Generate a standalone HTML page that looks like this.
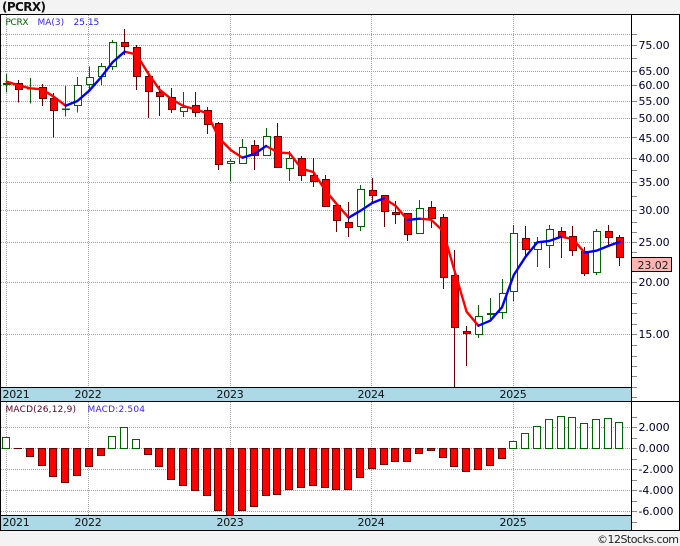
<!DOCTYPE html>
<html><head><meta charset="utf-8"><title>PCRX</title>
<style>
html,body{margin:0;padding:0;background:#f3f3f3;width:680px;height:546px;overflow:hidden}
svg{display:block}
text{font-family:"DejaVu Sans","Liberation Sans",sans-serif}
.y{font-size:11px;fill:#000033;letter-spacing:-.1px}
.b{font-size:11px;fill:#111;letter-spacing:-.25px}
.g rect{fill:#fff;stroke:#006400;stroke-width:1}
.g path{stroke:#006400;stroke-width:1;fill:none}
.r rect{fill:#f00;stroke:#700000;stroke-width:1}
.r path{stroke:#660000;stroke-width:1;fill:none}
.ma{fill:none;stroke-width:2.4;stroke-linejoin:round;stroke-linecap:round}
</style></head>
<body>
<svg width="680" height="546" viewBox="0 0 680 546" xmlns="http://www.w3.org/2000/svg">
<rect width="680" height="546" fill="#f3f3f3"/>
<rect x="0" y="14" width="680" height="517" fill="#fff"/>
<text x="2" y="11" font-size="12" font-weight="bold" fill="#111" textLength="44">(PCRX)</text>

<!-- grid -->
<path fill="none" stroke="#a0a0a0" stroke-dasharray="1 1" d="M1 34.5H632M1 45.5H632M1 58.5H632M1 71.5H632M1 85.5H632M1 101.5H632M1 118.5H632M1 137.5H632M1 158.5H632M1 182.5H632M1 210.5H632M1 242.5H632M1 282.5H632M1 334.5H632M1 427.5H632M1 448.5H632M1 469.5H632M1 490.5H632M1 511.5H632M6.5 15V387M88.5 15V387M230.5 15V387M371.5 15V387M513.5 15V387M6.5 402V515M88.5 402V515M230.5 402V515M371.5 402V515M513.5 402V515"/>
<path fill="none" stroke="#888" d="M632 34.5h5M632 45.5h5M632 58.5h5M632 71.5h5M632 85.5h5M632 101.5h5M632 118.5h5M632 137.5h5M632 158.5h5M632 170.5h5M632 182.5h5M632 196.5h5M632 210.5h5M632 222.5h5M632 232.5h5M632 242.5h5M632 252.5h5M632 282.5h5M632 293.5h5M632 303.5h5M632 313.5h5M632 324.5h5M632 334.5h5M632 345.5h5M632 356.5h5M632 366.5h5M632 376.5h5M632 387.5h5M632 397.5h5M632 417.5h5M632 427.5h5M632 438.5h5M632 448.5h5M632 459.5h5M632 469.5h5M632 480.5h5M632 490.5h5M632 501.5h5M632 511.5h5M632 522.5h5"/>

<!-- green candles -->
<g class="g">
<path d="M6.5 74V92.5"/><rect x="3.5" y="83.5" width="7" height="1"/>
<path d="M30.5 78V103.5"/><rect x="27.5" y="88" width="7" height="1"/>
<path d="M65.5 86V116.5"/><rect x="62.5" y="109" width="7" height="0.5"/>
<path d="M77.5 77V112.5"/><rect x="74.5" y="85.5" width="7" height="20"/>
<path d="M89.5 66.5V90"/><rect x="86.5" y="77.5" width="7" height="7"/>
<path d="M101.5 63V85"/><rect x="98.5" y="66.5" width="7" height="10"/>
<path d="M112.5 40V70"/><rect x="109.5" y="42.5" width="7" height="24"/>
<path d="M183.5 92V117"/><rect x="180.5" y="107.5" width="7" height="4"/>
<path d="M230.5 159V181"/><rect x="227.5" y="161.5" width="7" height="2"/>
<path d="M242.5 139V163.5"/><rect x="239.5" y="147.5" width="7" height="16"/>
<path d="M266.5 128V155.5"/><rect x="263.5" y="136.5" width="7" height="19"/>
<path d="M289.5 151V181"/><rect x="286.5" y="158.5" width="7" height="10"/>
<path d="M360.5 185V231"/><rect x="357.5" y="189.5" width="7" height="37"/>
<path d="M419.5 200V233.5"/><rect x="416.5" y="208.5" width="7" height="25"/>
<path d="M478.5 305V338"/><rect x="475.5" y="316.5" width="7" height="18"/>
<path d="M490.5 298V320"/><rect x="487.5" y="313.5" width="7" height="1"/>
<path d="M502.5 279V319"/><rect x="499.5" y="293.5" width="7" height="19"/>
<path d="M513.5 225V301"/><rect x="510.5" y="233.5" width="7" height="58"/>
<path d="M537.5 237V267"/><rect x="534.5" y="242.5" width="7" height="7"/>
<path d="M549.5 225V268"/><rect x="546.5" y="229.5" width="7" height="16"/>
<path d="M596.5 229V275"/><rect x="593.5" y="231.5" width="7" height="41"/>
</g>

<!-- red candles -->
<g class="r">
<path d="M18.5 80V102.5"/><rect x="15.5" y="83.5" width="7" height="6"/>
<path d="M42.5 84V106"/><rect x="39.5" y="87.5" width="7" height="11"/>
<path d="M53.5 93V137.5"/><rect x="50.5" y="98.5" width="7" height="12"/>
<path d="M124.5 29V55"/><rect x="121.5" y="42.5" width="7" height="4"/>
<path d="M136.5 45V90"/><rect x="133.5" y="47.5" width="7" height="29"/>
<path d="M148.5 71V118"/><rect x="145.5" y="76.5" width="7" height="15"/>
<path d="M159.5 86V116"/><rect x="156.5" y="92.5" width="7" height="4"/>
<path d="M171.5 88V113"/><rect x="168.5" y="97.5" width="7" height="12"/>
<path d="M195.5 92V117"/><rect x="192.5" y="105.5" width="7" height="7"/>
<path d="M207.5 107V134"/><rect x="204.5" y="110.5" width="7" height="14"/>
<path d="M218.5 122V170"/><rect x="215.5" y="123.5" width="7" height="41"/>
<path d="M254.5 140V170"/><rect x="251.5" y="145.5" width="7" height="10"/>
<path d="M277.5 123V167.5"/><rect x="274.5" y="136.5" width="7" height="31"/>
<path d="M301.5 156V181"/><rect x="298.5" y="158.5" width="7" height="17"/>
<path d="M313.5 158V187"/><rect x="310.5" y="175.5" width="7" height="6"/>
<path d="M325.5 175V207"/><rect x="322.5" y="179.5" width="7" height="27"/>
<path d="M336.5 204V232"/><rect x="333.5" y="205.5" width="7" height="15"/>
<path d="M348.5 202V237"/><rect x="345.5" y="222.5" width="7" height="5"/>
<path d="M372.5 178V202"/><rect x="369.5" y="190.5" width="7" height="5"/>
<path d="M384.5 195V227"/><rect x="381.5" y="195.5" width="7" height="16"/>
<path d="M395.5 201V224"/><rect x="392.5" y="212.5" width="7" height="2"/>
<path d="M407.5 213V241"/><rect x="404.5" y="213.5" width="7" height="21"/>
<path d="M431.5 201V228"/><rect x="428.5" y="207.5" width="7" height="11"/>
<path d="M443.5 214V289"/><rect x="440.5" y="217.5" width="7" height="60"/>
<path d="M454.5 250V387"/><rect x="451.5" y="275.5" width="7" height="52"/>
<path d="M466.5 326V366"/><rect x="463.5" y="331.5" width="7" height="2"/>
<path d="M525.5 226V257"/><rect x="522.5" y="238.5" width="7" height="11"/>
<path d="M561.5 227V258"/><rect x="558.5" y="231.5" width="7" height="6"/>
<path d="M572.5 226V256"/><rect x="569.5" y="236.5" width="7" height="14"/>
<path d="M584.5 247V276"/><rect x="581.5" y="251.5" width="7" height="22"/>
<path d="M608.5 225V247"/><rect x="605.5" y="231.5" width="7" height="6"/>
<path d="M619.5 235V266"/><rect x="616.5" y="237.5" width="7" height="20"/>
</g>

<!-- MA line -->
<g class="ma" stroke="#f00">
<polyline points="6.6,81.7 18.4,85.3 30.2,88.3 42,89.3 53.8,96.7 65.6,105.7"/>
<polyline points="124.6,51.7 136.3,54.3 148.1,73.3 159.9,90 171.7,99.3 183.5,106 195.3,109.3 207.1,113.3 218.9,138 230.7,150 242.5,157.7"/>
<polyline points="266.1,146 277.9,152.3 289.7,153.3 301.5,168.7 313.3,172 325.1,190 336.9,204.3 348.7,217.7"/>
<polyline points="384,198.3 395.8,206 407.6,220"/>
<polyline points="419.4,218.7 431.2,219.7 443,231 454.8,271.7 466.6,311.7 478.4,325.7"/>
<polyline points="561,236.7 572.8,239 584.6,252.7"/>
</g>
<g class="ma" stroke="#00f">
<polyline points="65.6,105.7 77.4,101 89.2,90.7 101,77.3 112.8,62 124.6,51.7"/>
<polyline points="242.5,157.7 254.3,154 266.1,146"/>
<polyline points="348.7,217.7 360.5,210.7 372.2,203 384,198.3"/>
<polyline points="407.6,220 419.4,218.7"/>
<polyline points="478.4,325.7 490.2,320.7 502,307.3 513.8,275 525.6,256.7 537.4,242.3 549.2,241 561,236.7"/>
<polyline points="584.6,252.7 596.4,250.7 608.1,246 619.9,241.7"/>
</g>

<!-- MACD green -->
<g class="g">
<rect x="2.5" y="437.5" width="7" height="11"/>
<rect x="108.5" y="436.5" width="7" height="12"/>
<rect x="120.5" y="427.5" width="7" height="21"/>
<rect x="132.5" y="439.5" width="7" height="9"/>
<rect x="509.5" y="441.5" width="7" height="7"/>
<rect x="521.5" y="433.5" width="7" height="15"/>
<rect x="533.5" y="426.5" width="7" height="22"/>
<rect x="545.5" y="419.5" width="7" height="29"/>
<rect x="557.5" y="416.5" width="7" height="32"/>
<rect x="568.5" y="417.5" width="7" height="31"/>
<rect x="580.5" y="423.5" width="7" height="25"/>
<rect x="592.5" y="419.5" width="7" height="29"/>
<rect x="604.5" y="418.5" width="7" height="30"/>
<rect x="615.5" y="422.5" width="7" height="26"/>
</g>
<!-- MACD red -->
<g class="r">
<path d="M14 448.5h8"/>
<rect x="26.5" y="448.5" width="7" height="8"/>
<rect x="38.5" y="448.5" width="7" height="17"/>
<rect x="49.5" y="448.5" width="7" height="28"/>
<rect x="61.5" y="448.5" width="7" height="34"/>
<rect x="73.5" y="448.5" width="7" height="27"/>
<rect x="85.5" y="448.5" width="7" height="18"/>
<rect x="97.5" y="448.5" width="7" height="7"/>
<rect x="144.5" y="448.5" width="7" height="6"/>
<rect x="155.5" y="448.5" width="7" height="18"/>
<rect x="167.5" y="448.5" width="7" height="31"/>
<rect x="179.5" y="448.5" width="7" height="37"/>
<rect x="191.5" y="448.5" width="7" height="42"/>
<rect x="203.5" y="448.5" width="7" height="47"/>
<rect x="214.5" y="448.5" width="7" height="62"/>
<rect x="226.5" y="448.5" width="7" height="67"/>
<rect x="238.5" y="448.5" width="7" height="62"/>
<rect x="250.5" y="448.5" width="7" height="58"/>
<rect x="262.5" y="448.5" width="7" height="47"/>
<rect x="273.5" y="448.5" width="7" height="46"/>
<rect x="285.5" y="448.5" width="7" height="41"/>
<rect x="297.5" y="448.5" width="7" height="39"/>
<rect x="309.5" y="448.5" width="7" height="37"/>
<rect x="321.5" y="448.5" width="7" height="39"/>
<rect x="332.5" y="448.5" width="7" height="41"/>
<rect x="344.5" y="448.5" width="7" height="41"/>
<rect x="356.5" y="448.5" width="7" height="29"/>
<rect x="368.5" y="448.5" width="7" height="20"/>
<rect x="380.5" y="448.5" width="7" height="16"/>
<rect x="391.5" y="448.5" width="7" height="13"/>
<rect x="403.5" y="448.5" width="7" height="13"/>
<rect x="415.5" y="448.5" width="7" height="5"/>
<rect x="427.5" y="448.5" width="7" height="2"/>
<rect x="439.5" y="448.5" width="7" height="9"/>
<rect x="450.5" y="448.5" width="7" height="18"/>
<rect x="462.5" y="448.5" width="7" height="23"/>
<rect x="474.5" y="448.5" width="7" height="21"/>
<rect x="486.5" y="448.5" width="7" height="17"/>
<rect x="498.5" y="448.5" width="7" height="10"/>
</g>

<!-- bands -->
<rect x="1" y="388" width="630" height="13" fill="#add8e6"/>
<rect x="1" y="516" width="630" height="14" fill="#add8e6"/>
<path fill="none" stroke="#000" d="M0 14.5H680M0 387.5H632M0 401.5H680M0 515.5H632M0 530.5H680M0.5 14V531M631.5 14V531M679.5 14V531"/>

<!-- panel labels -->
<text x="5.5" y="25" font-size="9" fill="#006400" textLength="23">PCRX</text>
<text x="37.5" y="25" font-size="9" fill="#3a1fff">MA(3)</text>
<text x="73.5" y="25" font-size="9" fill="#1a1aff">25.15</text>
<text x="5.5" y="412" font-size="9" fill="#600020" textLength="70.5">MACD(26,12,9)</text>
<text x="87.5" y="412" font-size="9" fill="#3a1fff" textLength="57.5">MACD:2.504</text>

<!-- x labels -->
<g class="b">
<text x="2.5" y="398">2021</text><text x="74.5" y="398">2022</text><text x="216.5" y="398">2023</text><text x="357.5" y="398">2024</text><text x="499.5" y="398">2025</text>
<text x="2.5" y="526">2021</text><text x="74.5" y="526">2022</text><text x="216.5" y="526">2023</text><text x="357.5" y="526">2024</text><text x="499.5" y="526">2025</text>
</g>

<!-- y labels -->
<g class="y">
<text x="638.5" y="49">75.00</text><text x="638.5" y="75">65.00</text><text x="638.5" y="89">60.00</text><text x="638.5" y="105">55.00</text><text x="638.5" y="122">50.00</text><text x="638.5" y="142">45.00</text><text x="638.5" y="162">40.00</text><text x="638.5" y="186">35.00</text><text x="638.5" y="214">30.00</text><text x="638.5" y="246">25.00</text><text x="638.5" y="286">20.00</text><text x="638.5" y="338">15.00</text>
<text x="638.5" y="431">2.000</text><text x="638.5" y="452">0.000</text><text x="638.5" y="473">-2.000</text><text x="638.5" y="494">-4.000</text><text x="638.5" y="515">-6.000</text>
</g>

<rect x="631.5" y="257.5" width="40" height="14" fill="#ffb4b4" stroke="#000"/>
<text x="637.5" y="269" font-size="11" fill="#222" letter-spacing="-.1">23.02</text>

<text x="597" y="543" font-size="11" fill="#222" textLength="82">©12Stocks.com</text>
</svg>
</body></html>
